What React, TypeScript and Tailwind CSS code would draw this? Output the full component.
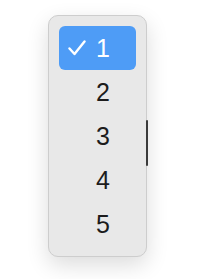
import React from "react";

const items = ["1", "2", "3", "4", "5"];

export default function App() {
  return (
    <div className="w-[214px] h-[279px] bg-white pt-[15px] pl-[48px]" style={{ fontFamily: '"Liberation Sans", Arial, sans-serif' }}>
      <div className="relative w-[99px] h-[242px] rounded-[10px] bg-[#e8e8e8] border border-[#cdcdcd] shadow-[0_8px_22px_rgba(0,0,0,0.14)] p-[10px] flex flex-col">
        {items.map((it, i) => {
          const sel = i === 0;
          return (
            <div
              key={it}
              className={`h-[44px] shrink-0 flex items-center rounded-[6px] ${sel ? "bg-[#4e9cf6] text-white" : "text-[#1c1c1c]"}`}
            >
              <div className="w-[37px] pl-[9px] flex items-center">
                {sel && (
                  <svg width="18" height="16" viewBox="0 0 18 16">
                    <polyline points="1.5,8.5 6.5,14 16.5,1.5" fill="none" stroke="white" strokeWidth="2.4" strokeLinecap="round" strokeLinejoin="round" />
                  </svg>
                )}
              </div>
              <span className="text-[25px] leading-none pt-[1px]">{it}</span>
            </div>
          );
        })}
        <div className="absolute right-[-2px] top-[104px] w-[2px] h-[46px] bg-[#3a3a3a] rounded-full" />
      </div>
    </div>
  );
}
